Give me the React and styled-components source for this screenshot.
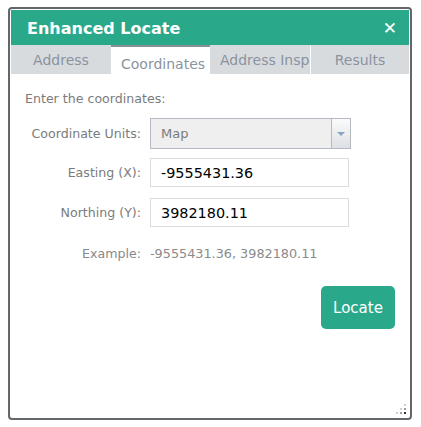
import React from "react";
import styled, { createGlobalStyle } from "styled-components";

const GlobalStyle = createGlobalStyle`
  body {
    margin: 0;
    background: #ffffff;
    font-family: "DejaVu Sans", Verdana, sans-serif;
  }
`;

const Panel = styled.div`
  position: relative;
  box-sizing: border-box;
  width: 404px;
  height: 413px;
  margin: 7px 0 0 8px;
  border: 2px solid #62676c;
  border-radius: 4px;
  padding: 1px;
  background: #ffffff;
  display: flex;
  flex-direction: column;
`;

const Header = styled.div`
  height: 35px;
  background: #2aa98a;
  display: flex;
  align-items: center;
  justify-content: space-between;
  padding: 0 12px 0 16px;
  color: #ffffff;
`;

const Title = styled.div`
  font-size: 16px;
  font-weight: bold;
  margin-top: 1px;
`;

const Close = styled.div`
  font-size: 17px;
  font-weight: bold;
  line-height: 1;
  margin-top: 1px;
`;

const TabBar = styled.div`
  display: grid;
  grid-template-columns: 100px 99px 100px 1fr;
  column-gap: 0;
  height: 29px;
  background: #d8dbde;
`;

const Tab = styled.div`
  box-sizing: border-box;
  overflow: hidden;
  white-space: nowrap;
  text-align: center;
  padding: ${(p) => (p.$active ? "9px 10px 0" : "5px 10px 0")};
  font-size: 14px;
  color: #8a939f;
  background: ${(p) => (p.$active ? "#ffffff" : "#d8dbde")};
  border-top: 2px solid ${(p) => (p.$active ? "#8a9096" : "#d8dbde")};
  border-left: ${(p) => (p.$sep ? "1px solid #ffffff" : "none")};
`;

const Content = styled.div`
  flex: 1;
  display: flex;
  flex-direction: column;
  padding: 17px 14px 0 14px;
  font-size: 12.6px;
  color: #7b7b7b;
`;

const Intro = styled.div`
  line-height: 16px;
  margin-bottom: 11px;
`;

const Row = styled.div`
  display: flex;
  align-items: center;
  margin-bottom: ${(p) => p.$gap || 0}px;
`;

const Label = styled.div`
  width: 116px;
  text-align: right;
  margin-right: 9px;
  line-height: 16px;
  color: ${(p) => (p.$light ? "#8a8a8a" : "#7b7b7b")};
`;

const Select = styled.div`
  box-sizing: border-box;
  width: 201px;
  height: 31px;
  border: 1px solid #b5bac2;
  background: #efefef;
  display: flex;
  align-items: stretch;
`;

const SelectValue = styled.div`
  flex: 1;
  display: flex;
  align-items: center;
  padding-left: 10px;
  font-size: 13px;
  color: #7b7b7b;
`;

const Arrow = styled.div`
  width: 18px;
  border-left: 1px solid #b5bac2;
  background: linear-gradient(#fbfbfb, #dde0e4);
  display: flex;
  align-items: center;
  justify-content: center;

  &::after {
    content: "";
    border-left: 4px solid transparent;
    border-right: 4px solid transparent;
    border-top: 4px solid #8da3c4;
    margin-top: 1px;
  }
`;

const Input = styled.input`
  box-sizing: border-box;
  width: 199px;
  height: 29px;
  border: 1px solid #dcdcdc;
  padding: 0 10px;
  font-family: "DejaVu Sans", Verdana, sans-serif;
  font-size: 14.4px;
  color: #000000;
  outline: none;
`;

const ExampleValue = styled.div`
  line-height: 16px;
  color: #8a8a8a;
  font-size: 12.8px;
`;

const Actions = styled.div`
  display: flex;
  justify-content: flex-end;
`;

const LocateButton = styled.button`
  width: 74px;
  height: 43px;
  border: none;
  border-radius: 5px;
  background: #2aa98a;
  color: #ffffff;
  font-family: "DejaVu Sans", Verdana, sans-serif;
  font-size: 15px;
  padding: 0;
`;

const Grip = styled.svg`
  position: absolute;
  right: 2px;
  bottom: 2px;
`;

const App = () => {
  return (
    <>
      <GlobalStyle />
      <Panel>
        <Header>
          <Title>Enhanced Locate</Title>
          <Close>✕</Close>
        </Header>
        <TabBar>
          <Tab>Address</Tab>
          <Tab $active>Coordinates</Tab>
          <Tab>Address Inspection</Tab>
          <Tab $sep>Results</Tab>
        </TabBar>
        <Content>
          <Intro>Enter the coordinates:</Intro>
          <Row $gap={9}>
            <Label>Coordinate Units:</Label>
            <Select>
              <SelectValue>Map</SelectValue>
              <Arrow />
            </Select>
          </Row>
          <Row $gap={11}>
            <Label>Easting (X):</Label>
            <Input defaultValue="-9555431.36" />
          </Row>
          <Row $gap={19}>
            <Label>Northing (Y):</Label>
            <Input defaultValue="3982180.11" />
          </Row>
          <Row $gap={24}>
            <Label $light>Example:</Label>
            <ExampleValue>-9555431.36, 3982180.11</ExampleValue>
          </Row>
          <Actions>
            <LocateButton>Locate</LocateButton>
          </Actions>
        </Content>
        <Grip width="12" height="12" viewBox="0 0 12 12">
          <rect x="8" y="0" width="2" height="2" fill="#d0d0d0" />
          <rect x="4" y="4" width="2" height="2" fill="#d0d0d0" />
          <rect x="8" y="4" width="2" height="2" fill="#a0a0a0" />
          <rect x="0" y="8" width="2" height="2" fill="#d0d0d0" />
          <rect x="4" y="8" width="2" height="2" fill="#a0a0a0" />
          <rect x="8" y="8" width="2" height="2" fill="#333333" />
        </Grip>
      </Panel>
    </>
  );
};

export default App;
